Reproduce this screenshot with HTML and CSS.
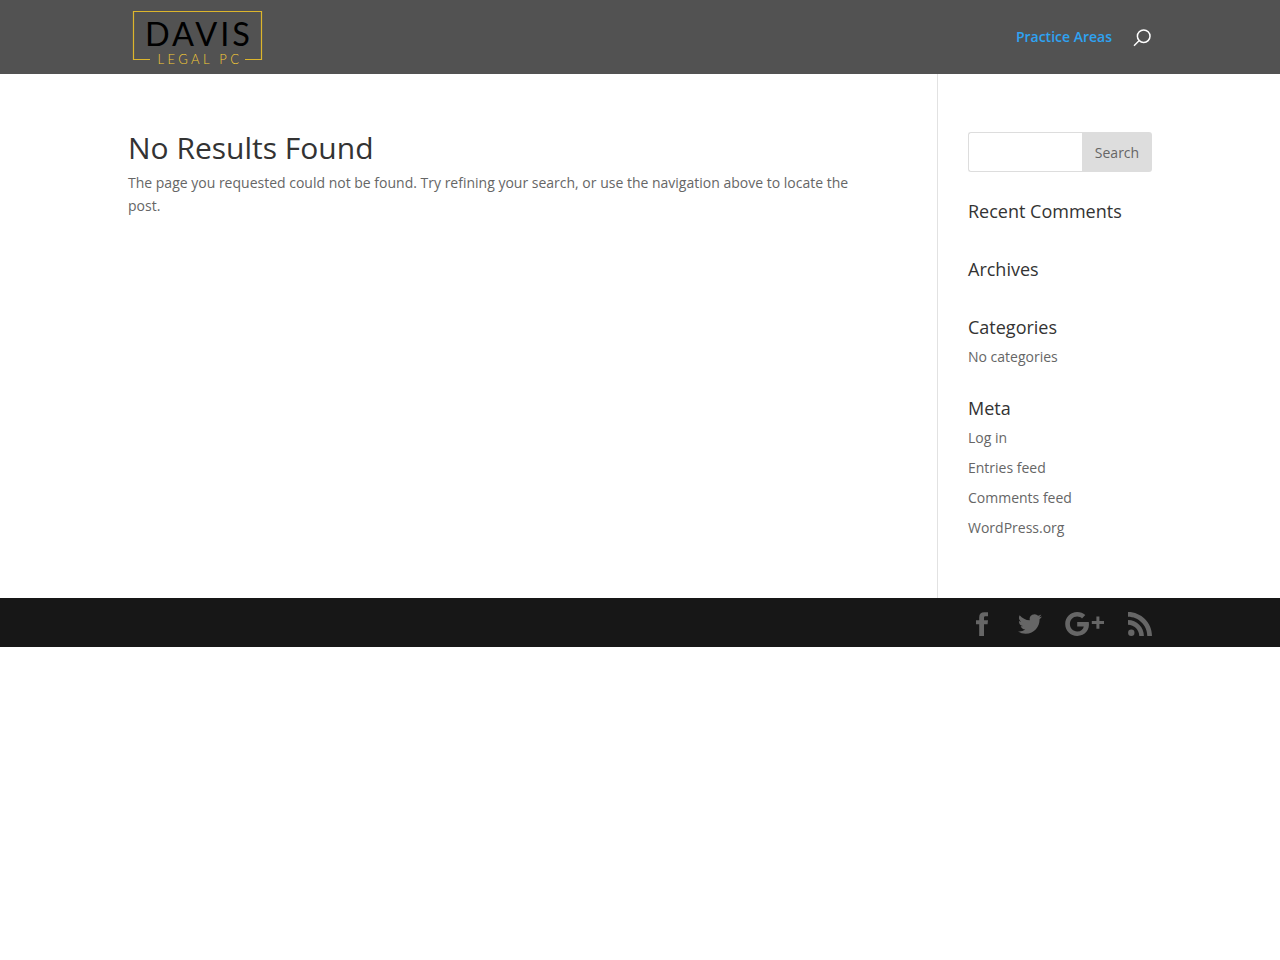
FILE: index.html
```html
<!DOCTYPE html>
<html lang="en">

<head>
    <meta charset="UTF-8">
    <meta name="viewport" content="width=device-width, initial-scale=1.0">
    <title>Page not found | Davis Legal PC</title>
    <link rel="stylesheet" href="styles.css">
</head>

<body>
    <!-- Header -->
    <header class="main-header">
        <div class="container header-inner">
            <a href="#" class="logo">
                <svg width="140" height="64" viewBox="0 0 140 64" role="img" aria-label="Davis Legal PC">
                    <path class="logo-frame" d="M22 54.5H5.5V6.5H133.5V54.5H117" />
                    <text class="logo-name" x="17" y="41.3" textLength="105">DAVIS</text>
                    <text class="logo-sub" x="29.5" y="59" textLength="81.5">LEGAL PC</text>
                </svg>
            </a>
            <nav class="top-nav">
                <a href="#" class="nav-link">Practice Areas</a>
                <button class="search-icon" aria-label="Search">
                    <svg width="18" height="18" viewBox="0 0 18 18">
                        <circle cx="10.7" cy="7.2" r="6.3" />
                        <path d="M6 11.8L1 16.8" />
                    </svg>
                </button>
            </nav>
        </div>
    </header>

    <!-- Main Content -->
    <div class="container main-content">
        <main class="left-area">
            <h1>No Results Found</h1>
            <p>The page you requested could not be found. Try refining your search, or use the navigation above to locate the post.</p>
        </main>

        <aside class="sidebar">
            <form class="widget search-form">
                <input type="text" aria-label="Search for">
                <button type="button">Search</button>
            </form>
            <div class="widget">
                <h4>Recent Comments</h4>
            </div>
            <div class="widget">
                <h4>Archives</h4>
            </div>
            <div class="widget">
                <h4>Categories</h4>
                <ul>
                    <li>No categories</li>
                </ul>
            </div>
            <div class="widget">
                <h4>Meta</h4>
                <ul>
                    <li><a href="#">Log in</a></li>
                    <li><a href="#">Entries feed</a></li>
                    <li><a href="#">Comments feed</a></li>
                    <li><a href="#">WordPress.org</a></li>
                </ul>
            </div>
        </aside>
    </div>

    <!-- Footer -->
    <footer class="main-footer">
        <div class="container social-icons">
            <a href="#" aria-label="Facebook">
                <svg width="12" height="24" viewBox="0 0 12 24">
                    <path d="M12 0.3V4.3H9.6C8.3 4.3 8 4.9 8 5.9V8.3H12L11.6 12.2H8V24H3.2V12.2H0V8.3H3.2V5.2C3.2 1.9 5 0.3 8.3 0.3Z" />
                </svg>
            </a>
            <a href="#" aria-label="Twitter">
                <svg width="24" height="24" viewBox="0 0 24 24">
                    <path d="M23.95 4.57a10 10 0 0 1-2.82.77 4.96 4.96 0 0 0 2.16-2.72c-.95.55-2 .96-3.13 1.18a4.92 4.92 0 0 0-8.38 4.48C7.69 8.1 4.07 6.13 1.64 3.16a4.82 4.82 0 0 0-.67 2.48c0 1.71.87 3.21 2.19 4.1a4.9 4.9 0 0 1-2.23-.62v.06a4.92 4.92 0 0 0 3.95 4.83 5 5 0 0 1-2.21.08 4.94 4.94 0 0 0 4.6 3.42A9.87 9.87 0 0 1 0 19.54a13.99 13.99 0 0 0 7.55 2.21c9.05 0 14-7.5 14-13.98 0-.21 0-.42-.02-.63a9.94 9.94 0 0 0 2.42-2.57Z" />
                </svg>
            </a>
            <a href="#" aria-label="Google Plus">
                <svg width="40" height="24" viewBox="0 0 40 24">
                    <path d="M12.2 10.1H23.8C25 17.8 20.2 24 12.2 24C5.5 24 0.2 18.7 0.2 12S5.5 0 12.2 0C15.4 0 18.2 1.2 20.3 3.1L17 6.4C15.8 5.3 14.2 4.6 12.2 4.6C8.1 4.6 4.9 7.9 4.9 12S8.1 19.4 12.2 19.4C16 19.4 18.2 17.3 18.8 14.4H12.2Z" />
                    <path d="M31.4 4.4H34.4V9H39V12H34.4V16.8H31.4V12H26.8V9H31.4Z" />
                </svg>
            </a>
            <a href="#" aria-label="RSS">
                <svg width="24" height="24" viewBox="0 0 24 24">
                    <circle cx="3.3" cy="20.7" r="3.2" />
                    <path d="M0 8.1C8.8 8.1 15.9 15.2 15.9 24H11.3C11.3 17.8 6.2 12.7 0 12.7Z" />
                    <path d="M0 0.1C13.2 0.1 24 10.8 24 24H19.3C19.3 13.4 10.6 4.8 0 4.8Z" />
                </svg>
            </a>
        </div>
    </footer>
</body>

</html>
```
FILE: styles.css
```css
/* Base Styles */
* {
    box-sizing: border-box;
}

body {
    margin: 0;
    background-color: #fff;
    color: #666;
    font-family: "Open Sans", Arial, sans-serif;
    font-size: 14px;
    line-height: 23px;
}

h1, h4, p, ul {
    margin: 0;
    padding: 0;
}

h1, h4 {
    color: #333;
    font-weight: 500;
    line-height: 1em;
}

h1 {
    padding: 1px 0 8px;
    font-size: 30px;
}

h4 {
    padding-bottom: 9px;
    font-size: 18px;
}

ul {
    list-style: none;
}

a {
    color: inherit;
    text-decoration: none;
}

svg {
    display: block;
}

.container {
    width: 80%;
    max-width: 1080px;
    margin: 0 auto;
}

/* Header */
.main-header {
    height: 74px;
    background-color: #525252;
}

.header-inner {
    height: 100%;
    display: flex;
    justify-content: space-between;
    align-items: center;
}

.logo-frame {
    fill: none;
    stroke: #dcb52c;
    stroke-width: 1.2;
}

.logo-name {
    fill: #000;
    font-family: Lato, sans-serif;
    font-size: 32.5px;
}

.logo-sub {
    fill: #f5cb36;
    font-family: Lato, sans-serif;
    font-size: 13px;
    font-weight: 300;
}

.top-nav {
    display: flex;
    align-items: center;
    gap: 21px;
    padding-right: 1px;
}

.nav-link {
    padding-bottom: 2px;
    color: #2ea3f2;
    font-weight: 600;
}

.search-icon {
    padding: 2px 0 0;
    border: 0;
    background: none;
}

.search-icon svg {
    fill: none;
    stroke: #fff;
    stroke-width: 1.5;
}

/* Main Content */
.main-content {
    display: flex;
    min-height: 524px;
}

.left-area {
    flex: none;
    width: 809px;
    padding: 58px 56px 23px 0;
}

.sidebar {
    flex: 1;
    min-width: 0;
    padding: 58px 0 0 30px;
    border-left: 1px solid #e2e2e2;
}

.widget {
    margin-bottom: 31px;
}

.widget li {
    margin-bottom: 7px;
}

.widget li:last-child {
    margin-bottom: 0;
}

.search-form {
    display: flex;
    height: 40px;
    margin-bottom: 30px;
}

.search-form input {
    flex: 1;
    min-width: 0;
    border: 1px solid #ddd;
    border-right: 0;
    border-radius: 3px 0 0 3px;
}

.search-form button {
    width: 70px;
    padding: 0;
    border: 0;
    border-radius: 0 3px 3px 0;
    background-color: #ddd;
    color: #666;
    font-family: inherit;
    font-size: 14px;
}

/* Footer */
.main-footer {
    height: 49px;
    background-color: #171717;
}

.social-icons {
    height: 100%;
    padding-top: 3px;
    display: flex;
    justify-content: flex-end;
    align-items: center;
    gap: 23px;
}

.social-icons a:first-child {
    margin-right: 7px;
}

.social-icons svg {
    fill: #666;
}
```
